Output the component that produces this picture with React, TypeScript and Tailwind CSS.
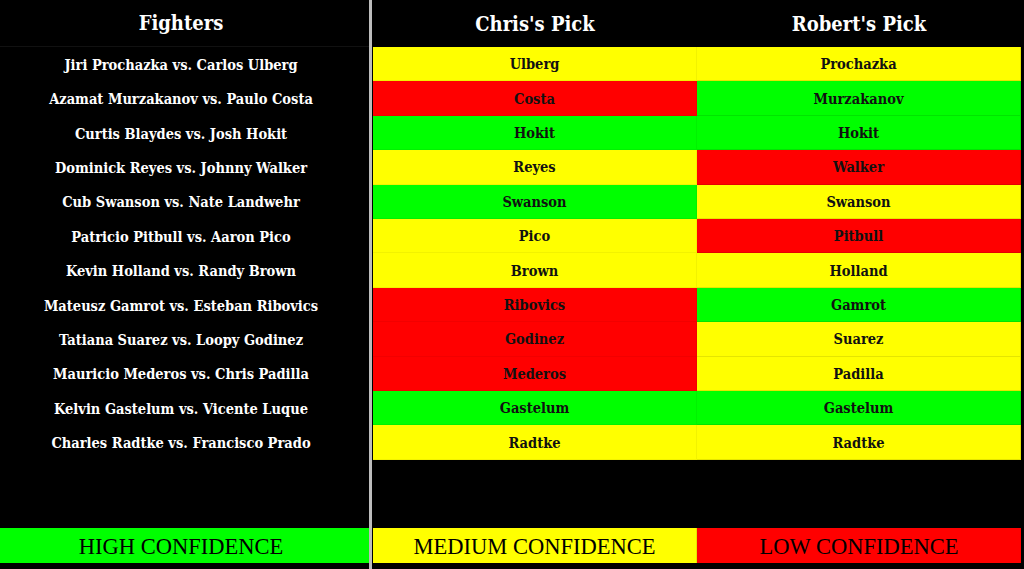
const Y = "bg-[#ffff00]";
const R = "bg-[#ff0000]";
const G = "bg-[#00ff00]";

const rows = [
  { fight: "Jiri Prochazka vs. Carlos Ulberg", chris: ["Ulberg", Y], robert: ["Prochazka", Y] },
  { fight: "Azamat Murzakanov vs. Paulo Costa", chris: ["Costa", R], robert: ["Murzakanov", G] },
  { fight: "Curtis Blaydes vs. Josh Hokit", chris: ["Hokit", G], robert: ["Hokit", G] },
  { fight: "Dominick Reyes vs. Johnny Walker", chris: ["Reyes", Y], robert: ["Walker", R] },
  { fight: "Cub Swanson vs. Nate Landwehr", chris: ["Swanson", G], robert: ["Swanson", Y] },
  { fight: "Patricio Pitbull vs. Aaron Pico", chris: ["Pico", Y], robert: ["Pitbull", R] },
  { fight: "Kevin Holland vs. Randy Brown", chris: ["Brown", Y], robert: ["Holland", Y] },
  { fight: "Mateusz Gamrot vs. Esteban Ribovics", chris: ["Ribovics", R], robert: ["Gamrot", G] },
  { fight: "Tatiana Suarez vs. Loopy Godinez", chris: ["Godinez", R], robert: ["Suarez", Y] },
  { fight: "Mauricio Mederos vs. Chris Padilla", chris: ["Mederos", R], robert: ["Padilla", Y] },
  { fight: "Kelvin Gastelum vs. Vicente Luque", chris: ["Gastelum", G], robert: ["Gastelum", G] },
  { fight: "Charles Radtke vs. Francisco Prado", chris: ["Radtke", Y], robert: ["Radtke", Y] },
];

const bold = "font-['DejaVu_Serif_Condensed','DejaVu_Serif',serif] font-bold";
const legend = "font-['Liberation_Serif',serif] text-[22.5px] text-black h-[35px] flex items-center justify-center pt-[2px]";

export default function App() {
  return (
    <div className="w-[1024px] h-[569px] bg-black flex overflow-hidden">
      {/* fighters column */}
      <div className="w-[369px] flex flex-col">
        <div className={`h-[47px] flex items-center justify-center pr-[7px] text-white text-[20px] border-b border-[#111] ${bold}`}>
          Fighters
        </div>
        {rows.map((r, i) => (
          <div
            key={i}
            className={`h-[34.4px] flex items-center justify-center pr-[7px] pt-px text-white text-[14.5px] ${bold}`}
          >
            {r.fight}
          </div>
        ))}
        <div className="flex-1" />
        <div className={`${legend} ${G} pr-[7px] mb-[6px]`}>HIGH CONFIDENCE</div>
      </div>

      {/* divider */}
      <div className="w-[3px] bg-[#bdbdbd] mr-px" />

      {/* picks */}
      <div className="w-[648px] flex flex-col">
        <div className="grid grid-cols-2 h-[47px]">
          <div className={`flex items-center justify-center text-white text-[20px] ${bold}`}>Chris's Pick</div>
          <div className={`flex items-center justify-center text-white text-[20px] ${bold}`}>Robert's Pick</div>
        </div>
        {rows.map((r, i) => (
          <div key={i} className="grid grid-cols-2 h-[34.4px]">
            <div className={`${r.chris[1]} flex items-center justify-center pt-px text-[#111] text-[14.5px] border-b border-r border-black/5 ${bold}`}>
              {r.chris[0]}
            </div>
            <div className={`${r.robert[1]} flex items-center justify-center pt-px text-[#111] text-[14.5px] border-b border-r border-black/10 ${bold}`}>
              {r.robert[0]}
            </div>
          </div>
        ))}
        <div className="flex-1" />
        <div className="grid grid-cols-2 mb-[6px]">
          <div className={`${legend} ${Y} border-r border-black/10`}>MEDIUM CONFIDENCE</div>
          <div className={`${legend} ${R}`}>LOW CONFIDENCE</div>
        </div>
      </div>
    </div>
  );
}
